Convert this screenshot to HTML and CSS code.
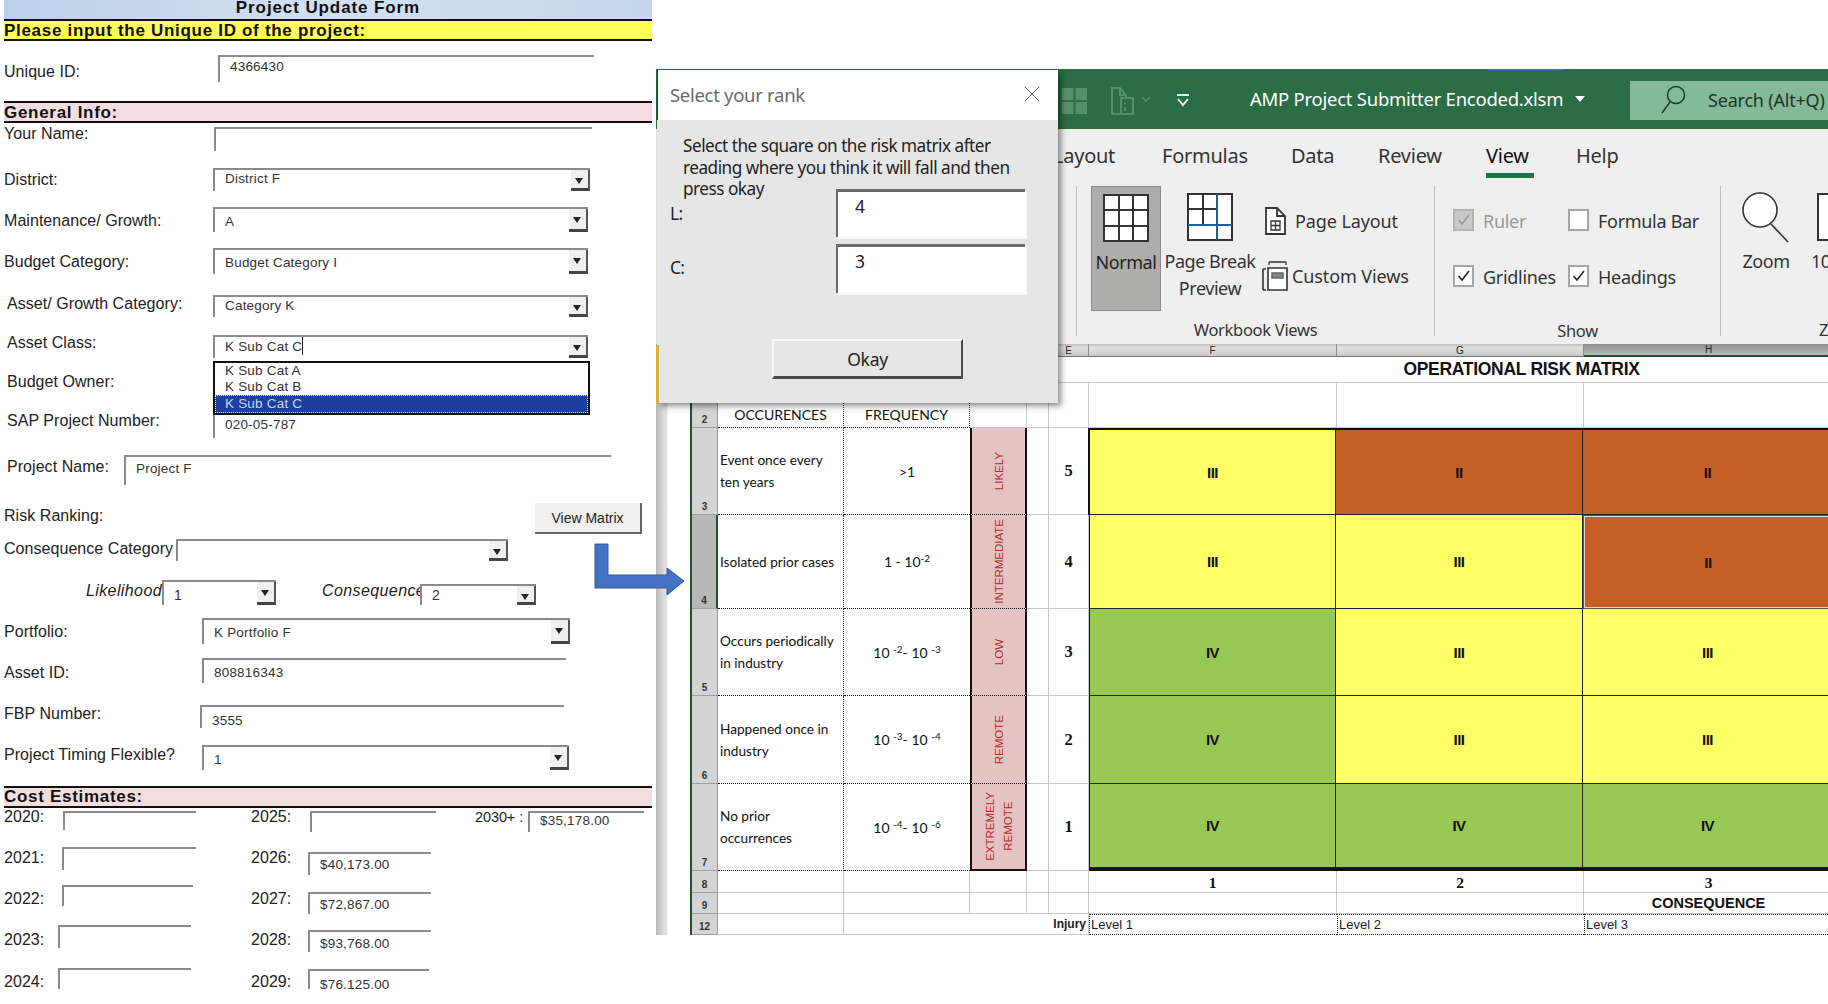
FILE: index.html
```html
<!DOCTYPE html>
<html>
<head>
<meta charset="utf-8">
<title>Project Update Form</title>
<link rel="stylesheet" href="styles.css">
</head>
<body>
<div class="page">

	<!-- user form -->
	<div class="form">
		<div class="form-title">Project Update Form</div>
		<div class="band band-yellow">Please input the Unique ID of the project:</div>

		<div class="row r-unique"><label>Unique ID:</label><div class="field">4366430</div></div>

		<div class="band band-pink b-general">General Info:</div>

		<div class="row r-name"><label>Your Name:</label><div class="field"></div></div>
		<div class="row r-district"><label>District:</label><div class="field combo">District F<span class="drop"></span></div></div>
		<div class="row r-maint"><label>Maintenance/ Growth:</label><div class="field combo">A<span class="drop"></span></div></div>
		<div class="row r-budget"><label>Budget Category:</label><div class="field combo">Budget Category I<span class="drop"></span></div></div>
		<div class="row r-growth"><label>Asset/ Growth Category:</label><div class="field combo">Category K<span class="drop"></span></div></div>
		<div class="row r-class">
			<label>Asset Class:</label>
			<div class="field combo">K Sub Cat C<span class="caret"></span><span class="drop"></span></div>
			<ul class="list">
				<li>K Sub Cat A</li>
				<li>K Sub Cat B</li>
				<li class="selected">K Sub Cat C</li>
			</ul>
		</div>
		<div class="row r-owner"><label>Budget Owner:</label></div>
		<div class="row r-sap"><label>SAP Project Number:</label><div class="field no-top">020-05-787</div></div>
		<div class="row r-project"><label>Project Name:</label><div class="field">Project F</div></div>
		<div class="row r-risk"><label>Risk Ranking:</label><button class="view-matrix">View Matrix</button></div>
		<div class="row r-conscat"><label>Consequence Category</label><div class="field combo"><span class="drop"></span></div></div>
		<div class="row r-like">
			<label class="it">Likelihood</label>
			<div class="field combo like-box">1<span class="drop"></span></div>
			<label class="it cons-label">Consequence</label>
			<div class="field combo cons-box">2<span class="drop"></span></div>
		</div>
		<div class="row r-portfolio"><label>Portfolio:</label><div class="field combo">K Portfolio F<span class="drop"></span></div></div>
		<div class="row r-asset"><label>Asset ID:</label><div class="field">808816343</div></div>
		<div class="row r-fbp"><label>FBP Number:</label><div class="field">3555</div></div>
		<div class="row r-timing"><label>Project Timing Flexible?</label><div class="field combo">1<span class="drop"></span></div></div>

		<div class="band band-pink b-cost">Cost Estimates:</div>

		<div class="cost">
			<div class="cost-col col-a">
				<div class="cost-row y20"><label>2020:</label><div class="field"></div></div>
				<div class="cost-row y21"><label>2021:</label><div class="field"></div></div>
				<div class="cost-row y22"><label>2022:</label><div class="field"></div></div>
				<div class="cost-row y23"><label>2023:</label><div class="field"></div></div>
				<div class="cost-row y24"><label>2024:</label><div class="field"></div></div>
			</div>
			<div class="cost-col col-b">
				<div class="cost-row y25"><label>2025:</label><div class="field"></div></div>
				<div class="cost-row y26"><label>2026:</label><div class="field">$40,173.00</div></div>
				<div class="cost-row y27"><label>2027:</label><div class="field">$72,867.00</div></div>
				<div class="cost-row y28"><label>2028:</label><div class="field">$93,768.00</div></div>
				<div class="cost-row y29"><label>2029:</label><div class="field">$76,125.00</div></div>
			</div>
			<div class="cost-col col-c">
				<div class="cost-row y30"><label>2030+ :</label><div class="field">$35,178.00</div></div>
			</div>
		</div>
	</div>

	<!-- excel window -->
	<div class="excel">
		<div class="titlebar">
			<svg class="qa-grid" width="25" height="26" viewBox="0 0 25 26"><path fill="#55906b" d="M0 0h11.5v12h-11.5zM13.5 0h11.5v12h-11.5zM0 14h11.5v12h-11.5zM13.5 14h11.5v12h-11.5z"/></svg>
			<svg class="qa-doc" width="23" height="28" viewBox="0 0 23 28" fill="none" stroke="#55906b" stroke-width="2"><path d="M9 27H1V1h8l6 7v3"/><path d="M9 1v7h6"/><path d="M10 11h12v16H10z"/><path d="M14 16v1M14 20v4"/></svg>
			<svg class="qa-chev" width="10" height="6" viewBox="0 0 10 6" fill="none" stroke="#55906b" stroke-width="1.6"><path d="M1 1l4 4 4-4"/></svg>
			<svg class="qa-more" width="14" height="13" viewBox="0 0 14 13" fill="none" stroke="#fff" stroke-width="1.8"><path d="M1 1h12"/><path d="M2 5l5 6 5-6"/></svg>
			<span class="doc-name">AMP Project Submitter Encoded.xlsm</span>
			<span class="doc-caret"></span>
			<div class="search">
				<svg width="26" height="30" viewBox="0 0 26 30" fill="none" stroke="#1d3b2a" stroke-width="1.5"><circle cx="16" cy="10" r="8.5"/><path d="M10 17L2 28"/></svg>
				<span>Search (Alt+Q)</span>
			</div>
			<span class="accent"></span>
		</div>

		<div class="ribbon">
			<div class="tabs">
				<span class="t-layout">Layout</span>
				<span class="t-formulas">Formulas</span>
				<span class="t-data">Data</span>
				<span class="t-review">Review</span>
				<span class="t-view">View</span>
				<span class="t-help">Help</span>
			</div>
			<div class="groups">
				<div class="group g-views">
					<div class="group-body">
						<div class="big active">
							<svg width="46" height="48" viewBox="0 0 46 48" fill="#fff" stroke="#333" stroke-width="2"><path d="M1 1h44v46H1zM16 1v46M30 1v46M1 16h44M1 32h44"/></svg>
							<span>Normal</span>
						</div>
						<div class="big page-break">
							<svg width="46" height="48" viewBox="0 0 46 48" fill="none" stroke-width="2"><path stroke="#333" fill="#fff" d="M1 1h44v46H1z"/><path stroke="#333" d="M16 1v31M1 16h30"/><path stroke="#1f5f9e" d="M30 1v46M1 32h44"/></svg>
							<span>Page Break<br>Preview</span>
						</div>
						<div class="small-list">
							<div class="small">
								<svg width="21" height="28" viewBox="0 0 21 28" fill="#fff" stroke="#333" stroke-width="1.8"><path d="M1 27V1h11l8 8v18z"/><path d="M12 1v8h8" fill="none"/><path d="M6 14h9v9H6zM10.5 14v9M6 18.5h9" fill="none" stroke-width="1.3"/></svg>
								<span>Page Layout</span>
							</div>
							<div class="small">
								<svg width="26" height="30" viewBox="0 0 26 30" fill="none" stroke="#333" stroke-width="1.6"><path d="M1 8v21M1 8h3M1 29h3"/><path d="M7 1h17M7 1v3M24 1v3" stroke-width="1.3"/><path d="M6 7h19v22H6z" fill="#fff"/><path d="M10 12h11v5H10z" fill="#888" stroke="#666"/></svg>
								<span>Custom Views</span>
							</div>
						</div>
					</div>
					<div class="group-name">Workbook Views</div>
				</div>
				<div class="group g-show">
					<div class="group-body checks">
						<div class="check off"><span class="box"><svg width="13" height="12" viewBox="0 0 13 12" fill="none" stroke="#999" stroke-width="1.6"><path d="M1.5 6l3.5 4 7-9"/></svg></span>Ruler</div>
						<div class="check"><span class="box"></span>Formula Bar</div>
						<div class="check"><span class="box"><svg width="13" height="12" viewBox="0 0 13 12" fill="none" stroke="#222" stroke-width="1.6"><path d="M1.5 6l3.5 4 7-9"/></svg></span>Gridlines</div>
						<div class="check"><span class="box"><svg width="13" height="12" viewBox="0 0 13 12" fill="none" stroke="#222" stroke-width="1.6"><path d="M1.5 6l3.5 4 7-9"/></svg></span>Headings</div>
					</div>
					<div class="group-name">Show</div>
				</div>
				<div class="group g-zoom">
					<div class="group-body">
						<div class="big zoom">
							<svg width="48" height="51" viewBox="0 0 48 51" fill="#fff" stroke="#333" stroke-width="1.6"><circle cx="18" cy="18" r="17"/><path d="M29 32l17 18" fill="none"/></svg>
							<span>Zoom</span>
						</div>
						<div class="big hundred">
							<svg width="24" height="48" viewBox="0 0 24 48" fill="#fff" stroke="#333" stroke-width="2"><path d="M1 1h30v46H1z"/></svg>
							<span>100%</span>
						</div>
					</div>
					<div class="group-name">Zoom</div>
				</div>
			</div>
		</div>

		<div class="sheet-wrap">
			<div class="edge"></div>
			<div class="sheet">
				<!-- column headers -->
				<div class="ch corner"></div>
				<div class="ch"></div>
				<div class="ch"></div>
				<div class="ch"></div>
				<div class="ch"></div>
				<div class="ch">E</div>
				<div class="ch">F</div>
				<div class="ch">G</div>
				<div class="ch ch-on">H</div>

				<!-- row 1 -->
				<div class="rh"></div>
				<div class="merged-title">OPERATIONAL RISK MATRIX</div>

				<!-- row 2 -->
				<div class="rh">2</div>
				<div class="c head">OCCURENCES</div>
				<div class="c head dot-b">FREQUENCY</div>
				<div class="c"></div>
				<div class="c"></div>
				<div class="c"></div>
				<div class="c"></div>
				<div class="c"></div>
				<div class="c"></div>

				<!-- row 3 -->
				<div class="rh">3</div>
				<div class="c occ">Event once every<br>ten years</div>
				<div class="c freq">&gt;1</div>
				<div class="cat"><span>LIKELY</span></div>
				<div class="c"></div>
				<div class="c num">5</div>

				<!-- matrix, spans rows 3-7 of the sheet -->
				<div class="matrix">
					<div class="m y">III</div><div class="m o">II</div><div class="m o">II</div>
					<div class="m y">III</div><div class="m y">III</div><div class="m o sel">II</div>
					<div class="m g">IV</div><div class="m y">III</div><div class="m y">III</div>
					<div class="m g">IV</div><div class="m y">III</div><div class="m y">III</div>
					<div class="m g">IV</div><div class="m g">IV</div><div class="m g">IV</div>
				</div>

				<!-- row 4 -->
				<div class="rh rh-on">4</div>
				<div class="c occ">Isolated prior cases</div>
				<div class="c freq">1 - 10<sup>-2</sup></div>
				<div class="cat"><span>INTERMEDIATE</span></div>
				<div class="c"></div>
				<div class="c num">4</div>

				<!-- row 5 -->
				<div class="rh">5</div>
				<div class="c occ">Occurs periodically<br>in industry</div>
				<div class="c freq">10 <sup>-2</sup>- 10 <sup>-3</sup></div>
				<div class="cat"><span>LOW</span></div>
				<div class="c"></div>
				<div class="c num">3</div>

				<!-- row 6 -->
				<div class="rh">6</div>
				<div class="c occ">Happened once in<br>industry</div>
				<div class="c freq">10 <sup>-3</sup>- 10 <sup>-4</sup></div>
				<div class="cat"><span>REMOTE</span></div>
				<div class="c"></div>
				<div class="c num">2</div>

				<!-- row 7 -->
				<div class="rh">7</div>
				<div class="c occ">No prior<br>occurrences</div>
				<div class="c freq">10 <sup>-4</sup>- 10 <sup>-6</sup></div>
				<div class="cat cat-last"><span>EXTREMELY<br>REMOTE</span></div>
				<div class="c"></div>
				<div class="c num">1</div>

				<!-- row 8 -->
				<div class="rh">8</div>
				<div class="c"></div>
				<div class="c"></div>
				<div class="c"></div>
				<div class="c"></div>
				<div class="c"></div>
				<div class="c axis">1</div>
				<div class="c axis">2</div>
				<div class="c axis">3</div>

				<!-- row 9 -->
				<div class="rh">9</div>
				<div class="c"></div>
				<div class="c"></div>
				<div class="c"></div>
				<div class="c"></div>
				<div class="c"></div>
				<div class="c"></div>
				<div class="c"></div>
				<div class="c cons">CONSEQUENCE</div>

				<!-- row 12 -->
				<div class="rh">12</div>
				<div class="c"></div>
				<div class="c injury">Injury</div>
				<div class="c level">Level 1</div>
				<div class="c level">Level 2</div>
				<div class="c level">Level 3</div>
			</div>
		</div>

		<!-- rank dialog over the sheet -->
		<div class="dialog">
			<div class="dialog-title">
				<span>Select your rank</span>
				<svg width="16" height="16" viewBox="0 0 16 16" fill="none" stroke="#666" stroke-width="1"><path d="M0.5 0.5l15 15M15.5 0.5l-15 15"/></svg>
			</div>
			<div class="dialog-body">
				<p>Select the square on the risk matrix after reading where you think it will fall and then press okay</p>
				<div class="dlg-row"><span>L:</span><div class="dlg-input">4</div></div>
				<div class="dlg-row dlg-row-c"><span>C:</span><div class="dlg-input">3</div></div>
				<button class="okay">Okay</button>
			</div>
		</div>
	</div>

	<!-- callout arrow from the button to the sheet -->
	<svg class="arrow" width="92" height="53" viewBox="0 0 92 53"><path fill="#4472c4" stroke="#34589a" d="M1 1h13v31h59v-7l17 13-17 14v-7H1z"/></svg>
</div>
</body>
</html>
```

FILE: styles.css
```css
*{
	box-sizing: border-box;
}
body{
	margin: 0;
	background: #fff;
}
.page{
	position: relative;
	display: flex;
	width: 1828px;
	height: 1004px;
	overflow: hidden;
	background: #fff;
}

/* form */
.form{
	width: 652px;
	height: 989px;
	overflow: hidden;
	flex: none;
	font-family: "Liberation Sans", Arial, sans-serif;
	font-size: 16px;
	letter-spacing: 0.05px;
	color: #222;
}
.form-title{
	margin-left: 4px;
	height: 19px;
	line-height: 15px;
	text-align: center;
	font-size: 17px;
	font-weight: bold;
	letter-spacing: 0.9px;
	color: #111;
	background: linear-gradient(90deg, #bcd0ea, #d3e0f2 50%, #c5d7ee);
}
.band{
	margin-left: 4px;
	height: 22px;
	line-height: 20px;
	border-top: 2px solid #111;
	border-bottom: 2px solid #111;
	font-size: 17px;
	font-weight: bold;
	letter-spacing: 0.7px;
	color: #111;
}
.band-yellow{
	background: #ffff55;
}
.band-pink{
	background: #f2dede;
	height: 22px;
}
.b-general{
	margin-top: 19px;
}
.b-cost{
	margin-top: 16px;
	line-height: 18px;
}
.row{
	position: relative;
	display: flex;
	align-items: flex-start;
	height: var(--h);
	margin-top: var(--m);
	padding-left: var(--lx, 4px);
}
.row > label{
	width: calc(var(--ix) - var(--lx, 4px));
	flex: none;
	line-height: 18px;
	margin-top: var(--ly);
	white-space: nowrap;
}
.field{
	position: relative;
	flex: none;
	width: var(--iw);
	height: 100%;
	padding: var(--ty, 4px) 0 0 10px;
	border-top: 2px solid #8a8a8a;
	border-left: 2px solid #8a8a8a;
	font-size: 13.5px;
	letter-spacing: 0.2px;
	line-height: 16px;
	color: #333;
	overflow: hidden;
	white-space: nowrap;
}
.no-top{
	border-top: 0;
}
.drop{
	position: absolute;
	right: 0;
	top: 0;
	bottom: 0;
	width: 19px;
	background: #f0f0f0;
	border-right: 2px solid #555;
	border-bottom: 3px solid #444;
}
.drop::after{
	content: "";
	position: absolute;
	left: 4px;
	top: 8px;
	border-left: 4.5px solid transparent;
	border-right: 4.5px solid transparent;
	border-top: 6px solid #222;
}
.caret{
	display: inline-block;
	width: 1px;
	height: 18px;
	margin-bottom: -4px;
	background: #222;
}
.list{
	position: absolute;
	left: 213px;
	top: 26px;
	width: 377px;
	height: 54px;
	margin: 0;
	padding: 0;
	list-style: none;
	background: #fff;
	border: 2px solid #111;
	z-index: 3;
	font-size: 13.5px;
	letter-spacing: 0.2px;
	color: #333;
}
.list li{
	height: 16px;
	line-height: 16px;
	padding-left: 10px;
}
.list .selected{
	height: 18px;
	line-height: 17px;
	background: #1c3fa0;
	color: #c8d4f0;
	outline: 1px dotted #ddd;
	outline-offset: -1px;
}
.r-unique{ --m: 14px; --h: 27px; --ix: 218px; --iw: 376px; --ly: 8px; --ty: 2px; }
.r-name{ --m: 4px; --h: 24px; --ix: 214px; --iw: 378px; --ly: -2px; }
.r-district{ --m: 17px; --h: 23px; --ix: 213px; --iw: 377px; --ly: 3px; --ty: 1px; }
.r-maint{ --m: 16px; --h: 25px; --ix: 213px; --iw: 375px; --ly: 5px; --ty: 5px; }
.r-budget{ --m: 16px; --h: 26px; --ix: 213px; --iw: 375px; --ly: 5px; --ty: 5px; }
.r-growth{ --m: 21px; --h: 22px; --lx: 7px; --ix: 213px; --iw: 375px; --ly: 0px; --ty: 1px; }
.r-class{ --m: 18px; --h: 23px; --lx: 7px; --ix: 213px; --iw: 375px; --ly: -1px; --ty: 0px; }
.r-owner{ --m: 15px; --h: 20px; --lx: 7px; --ix: 213px; --ly: 0px; }
.r-sap{ --m: 22px; --h: 23px; --lx: 7px; --ix: 213px; --iw: 375px; --ly: -3px; --ty: 2px; }
.r-project{ --m: 17px; --h: 30px; --lx: 7px; --ix: 124px; --iw: 487px; --ly: 3px; --ty: 4px; }
.r-risk{ --m: 18px; --h: 31px; --ix: 535px; --ly: 4px; }
.r-conscat{ --m: 5px; --h: 22px; --ix: 176px; --iw: 332px; --ly: 1px; }
.r-like{ --m: 19px; --h: 25px; --ix: 84px; --ly: 2px; --ty: 5px; }
.r-portfolio{ --m: 13px; --h: 26px; --ix: 202px; --iw: 368px; --ly: 5px; --ty: 5px; }
.r-asset{ --m: 14px; --h: 25px; --ix: 202px; --iw: 364px; --ly: 6px; --ty: 5px; }
.r-fbp{ --m: 22px; --h: 23px; --ix: 200px; --iw: 364px; --ly: 0px; --ty: 6px; }
.r-timing{ --m: 17px; --h: 25px; --ix: 202px; --iw: 367px; --ly: 1px; --ty: 5px; }
.r-like > .it{
	width: 78px;
	margin-left: 80px;
	text-align: right;
	font-style: italic;
	letter-spacing: 0.4px;
	overflow: hidden;
}
.like-box{
	width: 114px;
}
.r-like > .cons-label{
	width: 98px;
	margin-left: 46px;
}
.cons-box{
	width: 116px;
	height: 21px;
	margin-top: 4px;
	padding-top: 1px;
}
.r-like .field{
	font-size: 14px;
}
.view-matrix{
	width: 107px;
	height: 100%;
	margin: 0;
	padding: 0;
	background: #f0f0f0;
	border: 0;
	border-right: 2px solid #666;
	border-bottom: 2px solid #666;
	font-family: "Liberation Sans", Arial, sans-serif;
	font-size: 14px;
	color: #222;
}

/* cost estimates */
.cost{
	display: flex;
	margin-top: 3px;
}
.cost-col{
	flex: none;
}
.col-a{
	width: 251px;
	padding-left: 4px;
}
.col-b{
	width: 224px;
}
.cost-row{
	display: flex;
	align-items: flex-start;
	height: var(--h);
	margin-top: var(--m);
}
.cost-row > label{
	width: var(--lw);
	flex: none;
	line-height: 18px;
	margin-top: var(--ly);
	white-space: nowrap;
}
.y20{ --m: 0px; --h: 19px; --lw: 59px; --iw: 133px; --ly: -3px; }
.y21{ --m: 17px; --h: 23px; --lw: 58px; --iw: 134px; --ly: 2px; }
.y22{ --m: 15px; --h: 21px; --lw: 58px; --iw: 131px; --ly: 5px; }
.y23{ --m: 19px; --h: 23px; --lw: 54px; --iw: 133px; --ly: 6px; }
.y24{ --m: 20px; --h: 23px; --lw: 54px; --iw: 133px; --ly: 5px; }
.y25{ --m: 0px; --h: 21px; --lw: 59px; --iw: 126px; --ly: -3px; }
.y26{ --m: 20px; --h: 23px; --lw: 57px; --iw: 123px; --ly: -3px; --ty: 3px; }
.y27{ --m: 17px; --h: 22px; --lw: 57px; --iw: 123px; --ly: -2px; --ty: 3px; }
.y28{ --m: 16px; --h: 22px; --lw: 57px; --iw: 123px; --ly: 1px; --ty: 4px; }
.y29{ --m: 17px; --h: 20px; --lw: 57px; --iw: 121px; --ly: 4px; --ty: 6px; }
.y30{ --m: 0px; --h: 21px; --lw: 53px; --iw: 116px; --ly: -3px; --ty: 0px; }
.y30 > label{
	font-size: 14.5px;
	letter-spacing: -0.1px;
}

/* excel */
.excel{
	position: relative;
	flex: none;
	width: 1172px;
	height: 866px;
	margin: 69px 0 0 4px;
	overflow: hidden;
	font-family: "Noto Sans", "Open Sans", sans-serif;
}
.titlebar{
	position: relative;
	display: flex;
	align-items: center;
	height: 60px;
	padding-left: 406px;
	background: #2b6d44;
	color: #fff;
}
.qa-grid{
	flex: none;
	margin-top: 3px;
}
.qa-doc{
	flex: none;
	margin: 3px 0 0 24px;
}
.qa-chev{
	flex: none;
	margin: 0 0 0 7px;
}
.qa-more{
	flex: none;
	margin: 2px 0 0 25px;
}
.doc-name{
	flex: none;
	width: 316px;
	margin: -2px 0 0 60px;
	font-size: 18.5px;
	letter-spacing: -0.25px;
	white-space: nowrap;
}
.doc-caret{
	flex: none;
	margin: 0 0 0 9px;
	border-left: 5px solid transparent;
	border-right: 5px solid transparent;
	border-top: 6px solid #fff;
}
.search{
	flex: none;
	display: flex;
	align-items: center;
	gap: 22px;
	width: 240px;
	height: 39px;
	margin: 2px 0 0 45px;
	padding-left: 30px;
	background: #85b999;
	color: #1b3527;
	font-size: 18px;
	letter-spacing: -0.2px;
	white-space: nowrap;
}
.accent{
	position: absolute;
	left: 832px;
	top: 0;
	width: 76px;
	height: 2px;
	background: #3a6ea5;
}
.ribbon{
	height: 215px;
	background: #efefef;
	color: #333;
}
.tabs{
	display: flex;
	height: 49px;
	padding-top: 13px;
	font-size: 20px;
	letter-spacing: -0.25px;
	line-height: 28px;
}
.tabs span{
	flex: none;
	white-space: nowrap;
}
.t-layout{ margin-left: 397px; width: 109px; }
.t-formulas{ width: 129px; }
.t-data{ width: 87px; }
.t-review{ width: 108px; }
.t-view{ width: 90px; height: 36px; color: #111; position: relative; }
.t-view::after{
	content: "";
	position: absolute;
	left: 0;
	top: 31px;
	width: 48px;
	height: 5px;
	background: #217346;
}
.groups{
	display: flex;
	height: 150px;
	margin: 8px 0 0 420px;
}
.group{
	flex: none;
	display: flex;
	flex-direction: column;
	border-left: 1px solid #bdbdbd;
}
.g-views{ width: 358px; padding-left: 14px; }
.g-show{ width: 286px; }
.g-zoom{ width: 200px; }
.group-body{
	display: flex;
	flex: 1;
}
.group-name{
	height: 20px;
	margin-bottom: -4px;
	line-height: 20px;
	text-align: center;
	font-size: 16.5px;
	letter-spacing: -0.3px;
}
.g-views .group-name{
	margin-left: -14px;
}
.g-zoom .group-name{
	text-align: left;
	padding-left: 98px;
}
.big{
	flex: none;
	display: flex;
	flex-direction: column;
	align-items: center;
	height: 125px;
	padding-top: 7px;
	font-size: 18px;
	letter-spacing: -0.45px;
	line-height: 27px;
	text-align: center;
	white-space: nowrap;
}
.big span{
	margin-top: 7px;
}
.active{
	width: 70px;
	background: #adadab;
	border: 1px solid #8b8b8b;
	color: #222;
}
.page-break{
	width: 92px;
	margin-left: 3px;
}
.small-list{
	display: flex;
	flex-direction: column;
	gap: 23px;
	margin: 19px 0 0 6px;
}
.small{
	display: flex;
	align-items: center;
	height: 32px;
	font-size: 18px;
	letter-spacing: -0.1px;
	white-space: nowrap;
}
.small svg{
	flex: none;
	margin-right: 4px;
}
.small:first-child svg{
	margin: 0 9px 0 3px;
}
.checks{
	display: grid;
	grid-template-columns: 115px 140px;
	grid-auto-rows: 56px;
	padding: 23px 0 0 18px;
}
.check{
	display: flex;
	align-items: flex-start;
	font-size: 18px;
	letter-spacing: -0.3px;
	line-height: 24px;
	white-space: nowrap;
}
.box{
	display: flex;
	align-items: center;
	justify-content: center;
	flex: none;
	width: 21px;
	height: 22px;
	margin-right: 9px;
	background: #fff;
	border: 2px solid #a6a6a6;
}
.off{
	color: #999;
}
.off .box{
	background: #c9c9c9;
	border-color: #b4b4b4;
}
.zoom{
	width: 90px;
	padding-top: 6px;
}
.zoom svg{
	flex: none;
}
.zoom span{
	margin-top: 5px;
}
.hundred{
	width: 60px;
	align-items: flex-start;
	overflow: hidden;
	padding-top: 7px;
}
.hundred svg{
	margin-left: 6px;
}
.hundred span{
	margin-top: 7px;
}

/* sheet */
.sheet-wrap{
	display: flex;
	height: 592px;
	background: #fff;
}
.edge{
	flex: none;
	width: 36px;
	background: linear-gradient(90deg, #b9b9b9, #dcdcdc 8px, #e4e4e4 11px, #fff 12px, #fff 34px, #1f5132 34px);
}
.sheet{
	flex: none;
	display: grid;
	grid-template-columns: 26px 126px 126px 57px 22px 40px 248px 247px 250px;
	grid-template-rows: 13px 26px 45px 87px 94px 87px 88px 87px 22px 21px 21px;
	width: 1142px;
	font-family: "Liberation Sans", Arial, sans-serif;
	color: #111;
}
.ch{
	display: flex;
	align-items: center;
	justify-content: center;
	border-right: 1px solid #8f8f8f;
	border-bottom: 1px solid #777;
	background: linear-gradient(#bdbdbd, #e2e2e2 30%, #c9c9c9);
	font-size: 10px;
	color: #222;
}
.ch-on{
	background: linear-gradient(#8f8f8f, #b9b9b9);
	border-bottom: 2px solid #1f5132;
}
.rh{
	display: flex;
	align-items: flex-end;
	justify-content: center;
	padding-bottom: 2px;
	background: #d4d4d4;
	border-right: 1px solid #999;
	border-bottom: 1px solid #9e9e9e;
	font-size: 10px;
	line-height: 10px;
	font-weight: bold;
	color: #333;
}
.rh-on{
	background: #b8b8b8;
	border-right: 2px solid #1f5132;
}
.c{
	border-right: 1px solid #c9c9c9;
	border-bottom: 1px solid #c9c9c9;
}
.merged-title{
	grid-column: 2 / 10;
	padding-left: 491px;
	text-align: center;
	font-size: 17.5px;
	line-height: 25px;
	font-weight: bold;
	letter-spacing: -0.3px;
	border-bottom: 1px solid #c9c9c9;
	white-space: nowrap;
}
.head{
	display: flex;
	align-items: flex-end;
	justify-content: center;
	padding-bottom: 4px;
	border-right: 1px dotted #333;
	border-bottom: 1px dotted #111;
	font-family: Lato, sans-serif;
	font-size: 14px;
	line-height: 17px;
}
.occ{
	display: flex;
	align-items: center;
	padding-left: 2px;
	border-right: 1px dotted #333;
	border-bottom: 1px dotted #111;
	font-family: Lato, sans-serif;
	font-size: 13.6px;
	line-height: 22px;
}
.freq{
	display: flex;
	align-items: center;
	justify-content: center;
	white-space: pre;
	border-right: 0;
	border-bottom: 1px dotted #111;
	font-family: Lato, sans-serif;
	font-size: 14px;
}
.freq sup{
	font-size: 10px;
	line-height: 0;
	margin-top: -7px;
}
.cat{
	display: flex;
	align-items: center;
	justify-content: center;
	background: #e6c3c3;
	border-left: 2px solid #111;
	border-right: 2px solid #111;
	border-bottom: 1px dotted #111;
	color: #b52a2a;
	font-size: 11.5px;
	line-height: 18px;
}
.cat span{
	writing-mode: vertical-rl;
	transform: rotate(180deg);
	text-align: center;
}
.cat-last{
	border-bottom: 2px solid #111;
}
.num{
	display: flex;
	align-items: center;
	justify-content: center;
	font-family: "Liberation Serif", serif;
	font-weight: bold;
	font-size: 16.5px;
}
.matrix{
	grid-column: 7 / 10;
	grid-row: 4 / 9;
	display: grid;
	grid-template-columns: 246px 247px 250px;
	grid-template-rows: 85px 94px 87px 88px 84px;
	border-top: 2px solid #111;
	border-left: 2px solid #111;
	border-bottom: 3px solid #111;
	margin-left: -1px;
}
.m{
	display: flex;
	align-items: center;
	justify-content: center;
	border-right: 1px solid #222;
	border-bottom: 1px solid #222;
	font-size: 15px;
	font-weight: bold;
	letter-spacing: -0.5px;
}
.y{
	background: #ffff66;
}
.o{
	background: #c55f25;
}
.g{
	background: #97c853;
}
.sel{
	border: 1px solid #4f6228;
	box-shadow: inset 0 0 0 1px #e4dcc0;
}
.axis{
	text-align: center;
	font-family: "Liberation Serif", serif;
	font-weight: bold;
	font-size: 15.5px;
	line-height: 24px;
}
.cons{
	text-align: center;
	font-weight: bold;
	font-size: 14.5px;
	line-height: 21px;
}
.injury{
	grid-column: 3 / 7;
	text-align: right;
	padding-right: 2px;
	font-weight: bold;
	font-size: 12px;
	line-height: 20px;
	color: #222;
}
.level{
	padding-left: 1px;
	border-top: 1px dotted #222;
	border-bottom: 1px dotted #222;
	border-left: 1px dotted #222;
	border-right: 0;
	font-size: 13px;
	line-height: 19px;
	color: #222;
}

/* dialog */
.dialog{
	position: absolute;
	left: 1px;
	top: 1px;
	width: 401px;
	height: 333px;
	background: #e6e6e6;
	box-shadow: 3px 3px 6px rgba(0,0,0,0.45);
	z-index: 2;
}
.dialog::after{
	content: "";
	position: absolute;
	left: -1px;
	top: 275px;
	bottom: 0;
	width: 3px;
	background: #d9b23c;
}
.dialog-title{
	display: flex;
	align-items: center;
	justify-content: space-between;
	height: 50px;
	padding: 0 18px 2px 12px;
	background: #fff;
	border-left: 1px solid #333;
	color: #6a6a6a;
	font-size: 18.5px;
	letter-spacing: -0.3px;
}
.dialog-body{
	display: flex;
	flex-direction: column;
	align-items: flex-start;
	padding: 15px 0 0 13px;
	color: #222;
	font-size: 17.2px;
	letter-spacing: -0.5px;
	line-height: 21.7px;
}
.dialog-body p{
	width: 345px;
	height: 65px;
	margin: 0 0 0 13px;
}
.dlg-row{
	display: flex;
	width: 100%;
	height: 48px;
	margin-top: -11px;
}
.dlg-row-c{
	height: 49px;
	margin-top: 7px;
}
.dlg-row span{
	flex: none;
	width: 20px;
	height: 36px;
	margin-right: 146px;
	padding-top: 14px;
}
.dlg-row-c span{
	padding-top: 13px;
}
.dlg-input{
	width: 189px;
	height: 100%;
	padding: 4px 0 0 17px;
	background: #fff;
	border-top: 3px solid #6a6a6a;
	border-left: 2px solid #6a6a6a;
	box-shadow: 2px 2px 0 #f7f7f7;
	font-size: 17.5px;
}
.okay{
	align-self: flex-start;
	width: 191px;
	height: 40px;
	margin: 46px 0 0 102px;
	padding: 0;
	background: #e6e6e6;
	border: 0;
	border-top: 2px solid #f8f8f8;
	border-left: 2px solid #f8f8f8;
	border-right: 2px solid #4a4a4a;
	border-bottom: 3px solid #4a4a4a;
	font-family: "Noto Sans", "Open Sans", sans-serif;
	font-size: 17.5px;
	letter-spacing: -0.3px;
	color: #222;
}
.arrow{
	position: absolute;
	left: 594px;
	top: 543px;
	z-index: 3;
}
```
